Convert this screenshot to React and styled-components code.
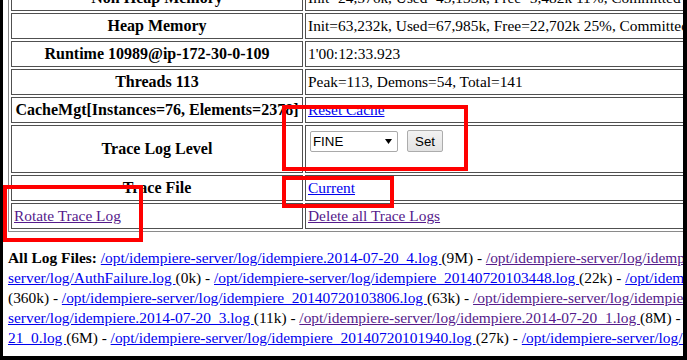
import styled, { createGlobalStyle } from "styled-components";

const GlobalStyle = createGlobalStyle`
	html, body {
		margin: 0;
		padding: 0;
		background: #fff;
	}
	body {
		font-family: "Liberation Serif", "Times New Roman", serif;
		font-size: 15.4px;
		color: #000;
	}
`;

const Frame = styled.div`
	position: relative;
	width: 687px;
	height: 360px;
	box-sizing: border-box;
	border-left: 3px solid #000;
	border-right: 4px solid #000;
	border-bottom: 4px solid #000;
	overflow: hidden;
	background: #fff;
`;

const Page = styled.div`
	width: 1200px;
	padding-left: 5px;
`;

const MonitorTable = styled.table`
	width: 1100px;
	margin-top: -18px;
	border: 1px solid #8a8a8a;
	border-collapse: separate;
	border-spacing: 2px;
	line-height: 20px;

	th,
	td {
		border: 1px solid #505050;
		padding: 2px;
		white-space: nowrap;
	}
	th {
		width: 286px;
		font-size: 16px;
		font-weight: bold;
		text-align: center;
	}
	td {
		text-align: left;
	}
`;

const Link = styled.a`
	color: ${(props) => (props.$visited ? "#551a8b" : "#0000ee")};
	text-decoration: underline;
	cursor: pointer;
`;

const FormRow = styled.div`
	display: flex;
	align-items: center;
	gap: 9px;
	height: 26px;
	margin-bottom: 16px;
	padding-left: 2px;
`;

const SelectWrap = styled.div`
	position: relative;
	width: 88px;
	height: 21px;
`;

const LevelSelect = styled.select`
	appearance: none;
	width: 100%;
	height: 100%;
	box-sizing: border-box;
	border: 1px solid #a9a9a9;
	border-radius: 2px;
	background: #fff;
	padding: 0 0 0 2px;
	font-family: "Liberation Sans", Arial, sans-serif;
	font-size: 13.3px;
	color: #000;
	outline: none;
`;

const Arrow = styled.svg`
	position: absolute;
	right: 6px;
	top: 8px;
	pointer-events: none;
`;

const SetButton = styled.button`
	width: 36px;
	height: 22px;
	box-sizing: border-box;
	padding: 0;
	border: 1px solid #acacac;
	border-radius: 2px;
	background: linear-gradient(#f2f2f2, #e3e3e3);
	font-family: "Liberation Sans", Arial, sans-serif;
	font-size: 13.3px;
	color: #000;
`;

const LogFiles = styled.div`
	margin-top: 16px;
	line-height: 20px;
`;

const LogLine = styled.div`
	white-space: pre;
`;

const Mark = styled.div`
	position: absolute;
	box-sizing: border-box;
	border: 4px solid #ff0000;
	left: ${(p) => p.$x}px;
	top: ${(p) => p.$y}px;
	width: ${(p) => p.$w}px;
	height: ${(p) => p.$h}px;
	pointer-events: none;
`;

const rows = [
	["Non Heap Memory", "Init=24,576k, Used=45,133k, Free=5,482k 11%, Committed=50,615k, Max=136,192k"],
	["Heap Memory", "Init=63,232k, Used=67,985k, Free=22,702k 25%, Committed=90,688k, Max=932,096k"],
	["Runtime 10989@ip-172-30-0-109", "1'00:12:33.923"],
	["Threads 113", "Peak=113, Demons=54, Total=141"],
];

const App = () => {
	return (
		<>
			<GlobalStyle />
			<Frame>
				<Page>
					<MonitorTable>
						<tbody>
							{rows.map((r) => (
								<tr key={r[0]}>
									<th>{r[0]}</th>
									<td>{r[1]}</td>
								</tr>
							))}
							<tr>
								<th>CacheMgt[Instances=76, Elements=2378]</th>
								<td>
									<Link>Reset Cache</Link>
								</td>
							</tr>
							<tr>
								<th>Trace Log Level</th>
								<td>
									<FormRow>
										<SelectWrap>
											<LevelSelect defaultValue="FINE">
												<option>OFF</option>
												<option>SEVERE</option>
												<option>WARNING</option>
												<option>INFO</option>
												<option>CONFIG</option>
												<option>FINE</option>
												<option>FINER</option>
												<option>FINEST</option>
												<option>ALL</option>
											</LevelSelect>
											<Arrow width="7" height="5" viewBox="0 0 7 5">
												<path d="M0 0 H7 L3.5 5 Z" fill="#000" />
											</Arrow>
										</SelectWrap>
										<SetButton>Set</SetButton>
									</FormRow>
								</td>
							</tr>
							<tr>
								<th>Trace File</th>
								<td>
									<Link>Current</Link>
								</td>
							</tr>
							<tr>
								<td>
									<Link $visited>Rotate Trace Log</Link>
								</td>
								<td>
									<Link $visited>Delete all Trace Logs</Link>
								</td>
							</tr>
						</tbody>
					</MonitorTable>
					<LogFiles>
						<LogLine>
							<b>All Log Files:</b>{" "}
							<Link>/opt/idempiere-server/log/idempiere.2014-07-20_4.log </Link>
							{"(9M) - "}
							<Link $visited>/opt/idempiere-server/log/idempiere.2014-07-20_2.log </Link>
							{"(5M) - "}
							<Link>/opt/idempiere-</Link>
						</LogLine>
						<LogLine>
							<Link>server/log/AuthFailure.log </Link>
							{"(0k) - "}
							<Link>/opt/idempiere-server/log/idempiere_20140720103448.log </Link>
							{"(22k) - "}
							<Link>/opt/idempiere-server/log/idempiere_20140720103550.log </Link>
						</LogLine>
						<LogLine>
							{"(360k) - "}
							<Link>/opt/idempiere-server/log/idempiere_20140720103806.log </Link>
							{"(63k) - "}
							<Link $visited>/opt/idempiere-server/log/idempiere.2014-07-19_0.log </Link>
						</LogLine>
						<LogLine>
							<Link>server/log/idempiere.2014-07-20_3.log </Link>
							{"(11k) - "}
							<Link $visited>/opt/idempiere-server/log/idempiere.2014-07-20_1.log </Link>
							{"(8M) - "}
							<Link>/opt/idempiere-server/log/idempiere.2014-07-</Link>
						</LogLine>
						<LogLine>
							<Link>21_0.log </Link>
							{"(6M) - "}
							<Link>/opt/idempiere-server/log/idempiere_20140720101940.log </Link>
							{"(27k) - "}
							<Link>/opt/idempiere-server/log/idempiere_20140720102215.log </Link>
						</LogLine>
					</LogFiles>
				</Page>
				<Mark $x={279} $y={105} $w={186} $h={66} />
				<Mark $x={279} $y={176} $w={112} $h={32} />
				<Mark $x={0} $y={185} $w={140} $h={57} />
			</Frame>
		</>
	);
};

export default App;
